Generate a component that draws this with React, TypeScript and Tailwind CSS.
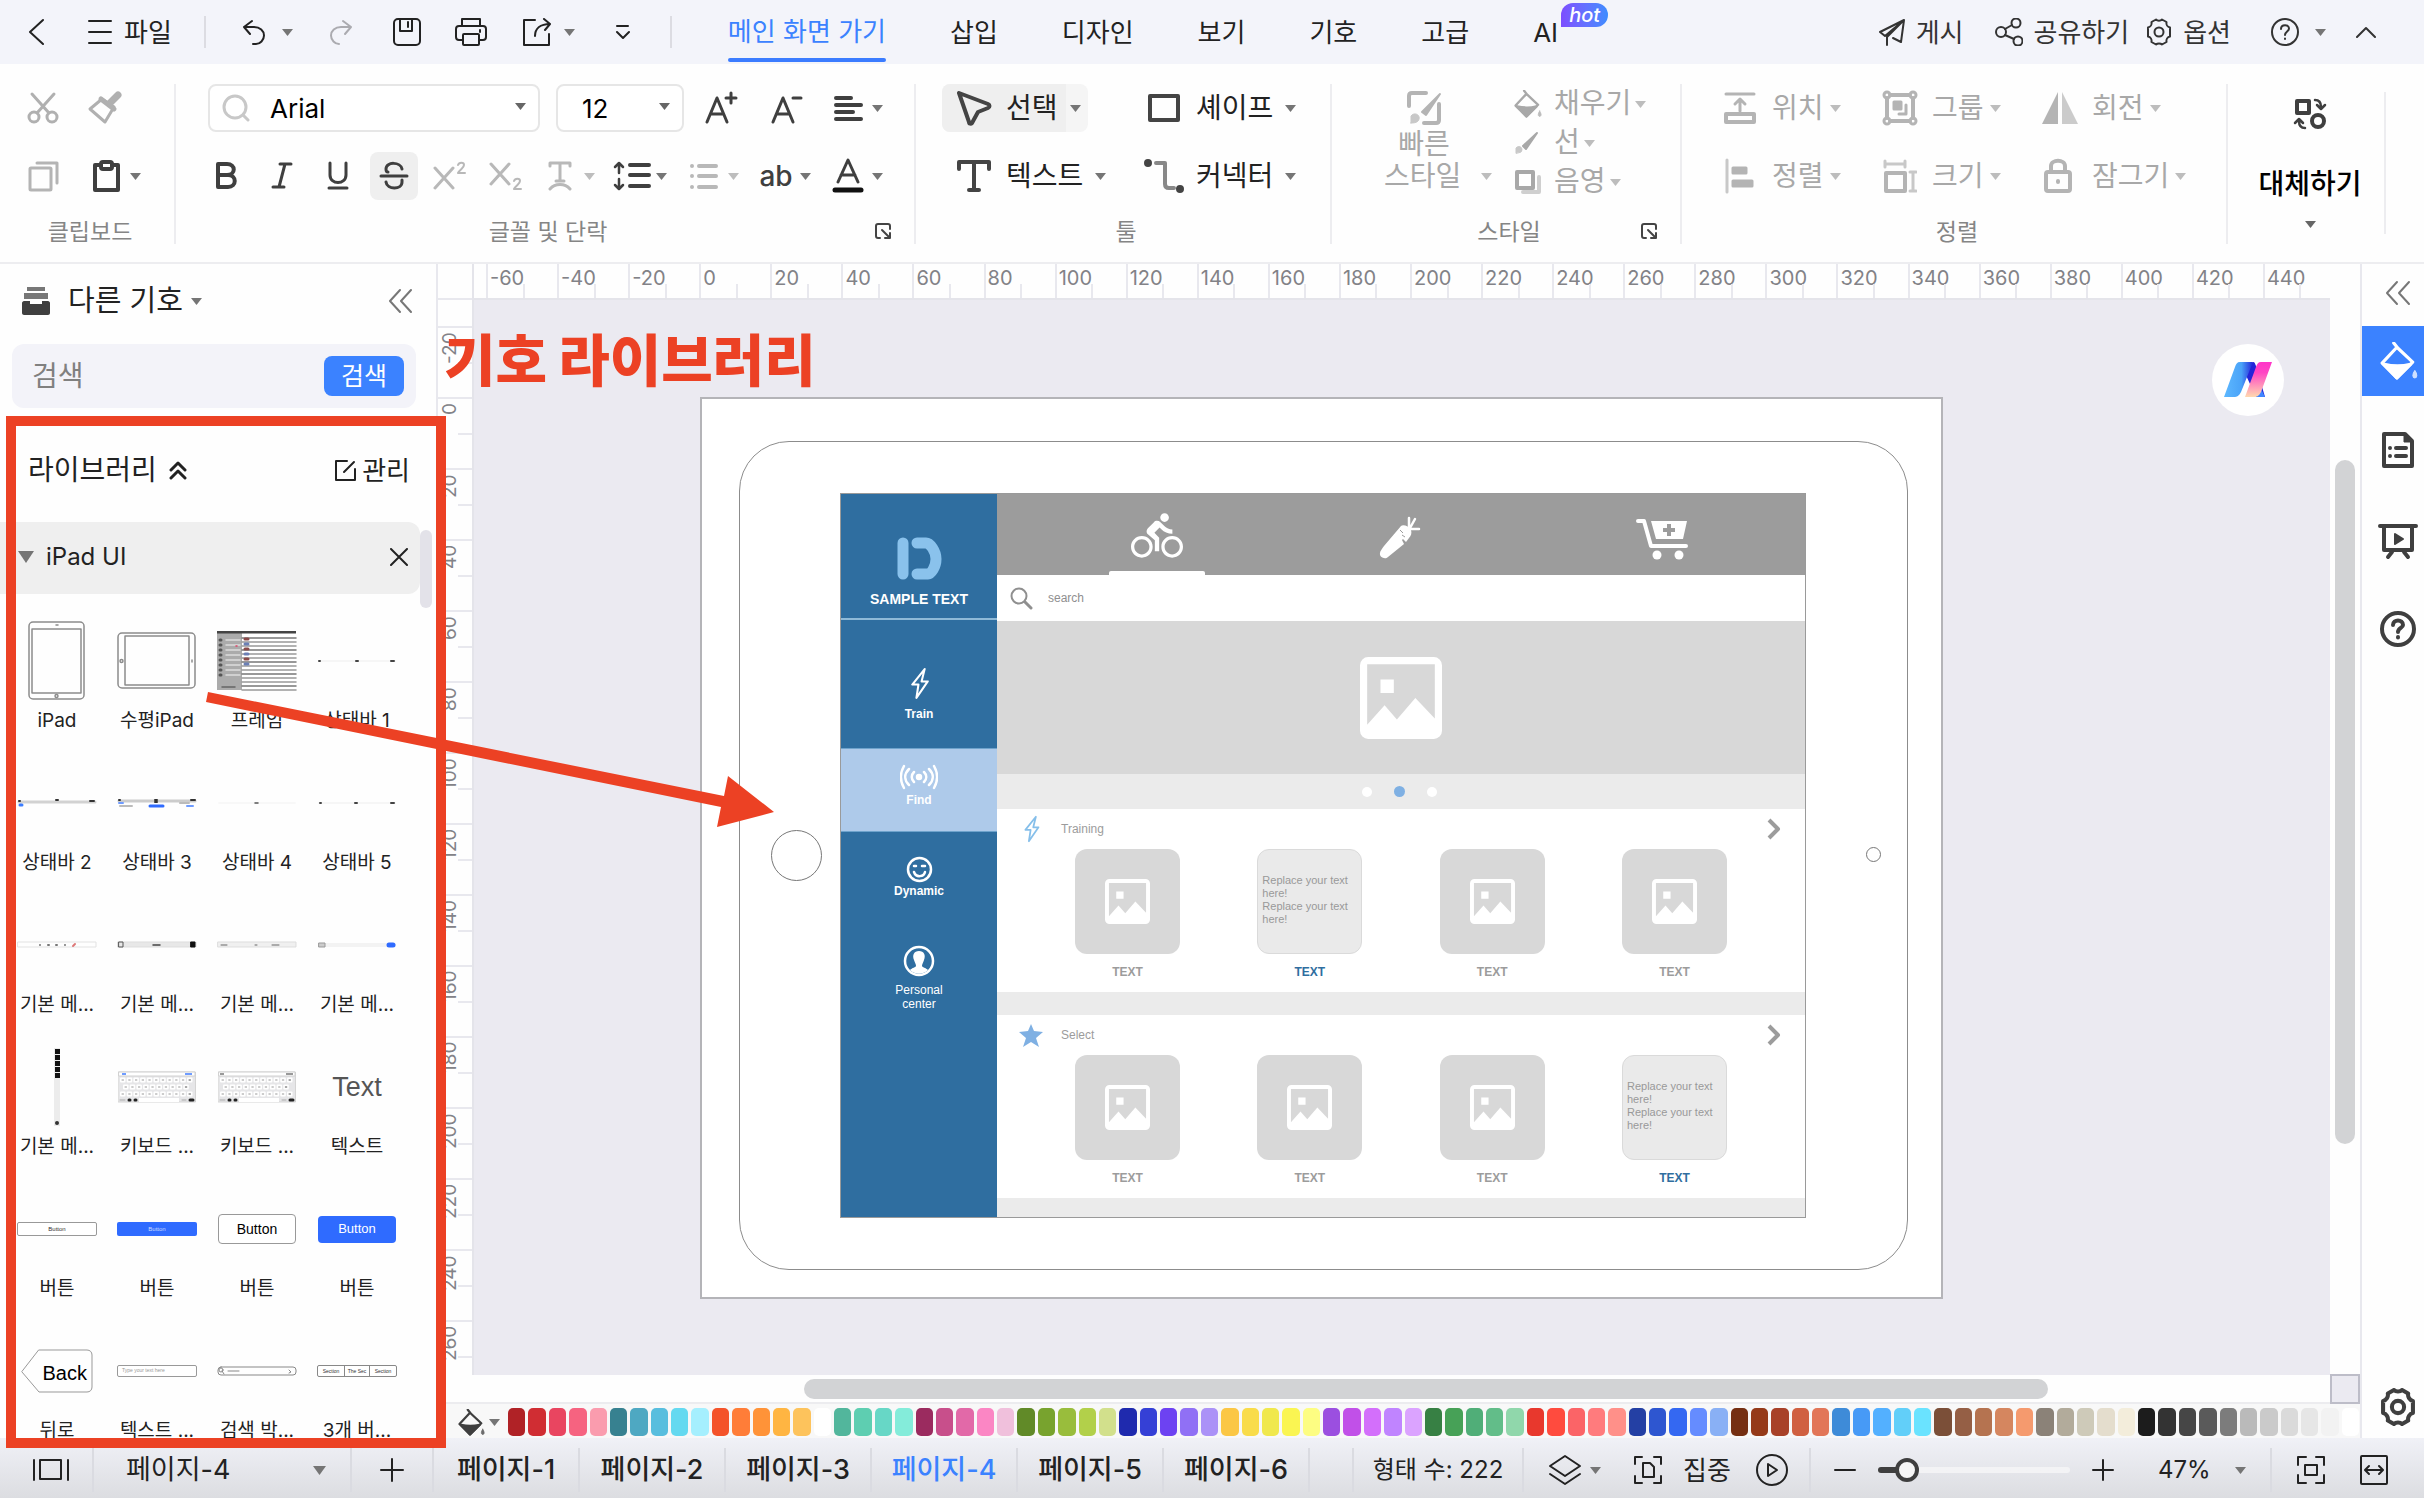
import React from "react";
import { MdDirectionsBike } from "react-icons/md";

type Kids = { children?: React.ReactNode };

function Ic({ w, h, sw = 2, c = "", children }: Kids & { w: number; h: number; sw?: number; c?: string }) {
  return (
    <svg width={w} height={h} viewBox={`0 0 ${w} ${h}`} fill="none" stroke="currentColor" strokeWidth={sw} strokeLinecap="round" strokeLinejoin="round" className={`shrink-0 ${c}`} aria-hidden="true">
      {children}
    </svg>
  );
}

function Caret({ c = "" }: { c?: string }) {
  return (
    <svg width="11" height="8" viewBox="0 0 11 8" fill="currentColor" className={`shrink-0 ${c}`} aria-hidden="true">
      <path d="M0 1h11L5.500 8z" />
    </svg>
  );
}

const CARET = "text-[#757575]";

/* ---------- Top bar ---------- */

const menuTabs = ["삽입", "디자인", "보기", "기호", "고급"];

function TopBar() {
  return (
    <header className="flex h-16 shrink-0 items-center bg-[#f3f4fa] pr-12 pl-7 text-[26px] text-[#222]">
      <button aria-label="뒤로 가기">
        <Ic w={16} h={28} sw={2}><path d="M15 2 2 14l13 12" /></Ic>
      </button>
      <button className="ml-11 flex items-center gap-3">
        <Ic w={24} h={26}><path d="M1 2h22M1 13h22M1 24h22" /></Ic>
        파일
      </button>
      <span className="ml-8 h-8 w-0.5 bg-[#dcdce2]" />
      <button aria-label="실행 취소" className="ml-9 flex items-center gap-4">
        <Ic w={24} h={26}><path d="M10 2 2 8l6 7M2 8h10c6 0 10 4 10 8.500s-4 8.500-8 8.500h-3" /></Ic>
        <Caret c={CARET} />
      </button>
      <button aria-label="다시 실행" className="ml-9 text-[#ababb0]">
        <Ic w={24} h={26}><path d="m14 2 8 6-6 7M22 8H12C6 8 2 12 2 16.500S6 25 10 25" /></Ic>
      </button>
      <button aria-label="저장" className="ml-10">
        <Ic w={28} h={28}><rect x="1" y="1" width="26" height="26" rx="4" /><path d="M7 1v12h12V1M15 4v5" /></Ic>
      </button>
      <button aria-label="인쇄" className="ml-[34px]">
        <Ic w={32} h={28}><path d="M7 8V1h18v7M7 22H4a3 3 0 0 1-3-3v-8a3 3 0 0 1 3-3h24a3 3 0 0 1 3 3v8a3 3 0 0 1-3 3h-3" /><rect x="8" y="16" width="16" height="11" rx="1" /><path d="M25 12v2" /></Ic>
      </button>
      <button aria-label="내보내기" className="ml-9 flex items-center gap-3">
        <Ic w={29} h={28}><path d="M12 2H1v25h25V16M12 18c0-7 5-12 15-12M21 1l6 5-5 6" /></Ic>
        <Caret c={CARET} />
      </button>
      <button aria-label="사용자 지정" className="ml-10">
        <Ic w={15} h={16}><path d="M2 2h11M2 8l6 6 6-6" /></Ic>
      </button>
      <span className="ml-10 h-8 w-0.5 bg-[#dcdce2]" />
      <nav className="ml-14 flex h-full items-center gap-16">
        <button className="flex h-full flex-col text-[#3b82ff]">
          <span className="flex grow items-center pt-1">메인 화면 가기</span>
          <span className="mb-0.5 h-1 w-full rounded-sm bg-[#3b7cff]" />
        </button>
        {menuTabs.map((t) => (
          <button key={t}>{t}</button>
        ))}
        <button className="relative">
          AI
          <span className="absolute -top-2.5 left-7 rounded-t-xl rounded-br-xl bg-linear-to-r from-[#7c4dff] to-[#3b8cff] px-2 text-[20px] leading-6 font-medium text-white italic">hot</span>
        </button>
      </nav>
      <div className="ml-auto flex items-center text-[26px] text-[#333]">
        <button className="flex items-center gap-2.5">
          <Ic w={28} h={28}><path d="M26 2 2 14l5 4L26 2l-3 22-8-4M9 27v-8L26 2" /></Ic>
          게시
        </button>
        <button className="ml-8 flex items-center gap-2.5">
          <Ic w={28} h={28}><circle cx="6" cy="14" r="5" /><circle cx="21" cy="5" r="4.500" /><circle cx="23" cy="23" r="4.500" /><path d="m10 11 7-4M10 17l9 4" /></Ic>
          공유하기
        </button>
        <button className="ml-4 flex items-center gap-2.5">
          <Gear size={28} sw={2} />
          옵션
        </button>
        <button aria-label="도움말" className="ml-10 flex items-center gap-4">
          <Ic w={28} h={28}><circle cx="14" cy="14" r="13" /><path d="M10 11c0-5 8-5 8-.5 0 3-4 3-4 6.500M14 20.500v.5" /></Ic>
          <Caret c={CARET} />
        </button>
        <button aria-label="리본 접기" className="ml-[30px]">
          <Ic w={20} h={12}><path d="m1 11 9-9 9 9" /></Ic>
        </button>
      </div>
    </header>
  );
}

function Gear({ size, sw }: { size: number; sw: number }) {
  return (
    <svg width={size} height={size} viewBox="0 0 28 28" fill="none" stroke="currentColor" strokeWidth={sw} strokeLinejoin="round" aria-hidden="true">
      <path d="M11 1.500c1.500 1.500 4.500 1.500 6 0l4.500 2.500c-.5 2.500 1 5 3.500 5.500v9c-2.500.5-4 3-3.500 5.500L17 26.500c-1.500-1.500-4.500-1.500-6 0L6.500 24c.5-2.500-1-5-3.500-5.500v-9c2.500-.5 4-3 3.500-5.500z" />
      <circle cx="14" cy="14" r="4.500" />
    </svg>
  );
}

/* ---------- Ribbon ---------- */

function Group({ width, label, launcher, children }: Kids & { width: string; label: string; launcher?: boolean }) {
  return (
    <section className={`relative flex shrink-0 flex-col pt-5 ${width}`}>
      <div className="h-[116px]">{children}</div>
      <div className="relative mt-4 pl-1 text-center text-[23px] leading-8 text-[#858585]">
        {label}
        {launcher && (
          <button aria-label={`${label} 설정`} className="absolute top-1.5 right-6 text-[#444]">
            <Ic w={18} h={18}><path d="M6 16H4a2 2 0 0 1-2-2V4a2 2 0 0 1 2-2h10a2 2 0 0 1 2 2v3M8 8l8 8M16 11v5h-5" /></Ic>
          </button>
        )}
      </div>
      <span className="absolute top-5 right-0 h-40 w-0.5 bg-[#ededf0]" />
    </section>
  );
}

function FontButton({ label, on, off, children }: Kids & { label: string; on?: boolean; off?: boolean }) {
  return (
    <button aria-label={label} className={`flex size-12 items-center justify-center rounded-lg ${on ? "bg-[#efefef]" : ""} ${off ? "text-[#b8b8b8]" : "text-[#3f3f3f]"}`}>
      {children}
    </button>
  );
}

function DropButton({ label, off, children }: Kids & { label: string; off?: boolean }) {
  return (
    <button aria-label={label} className={`flex h-12 w-[72px] shrink-0 items-center ${off ? "text-[#b8b8b8]" : "text-[#3f3f3f]"}`}>
      <span className="flex w-10 justify-center">{children}</span>
      <Caret c={off ? "ml-1 text-[#bdbdbd]" : "ml-1 text-[#757575]"} />
    </button>
  );
}

function TextTool({ icon, text, c = "" }: { icon: React.ReactNode; text: string; c?: string }) {
  return (
    <button className={`flex h-12 items-center ${c}`}>
      <span className="flex w-10 justify-center text-[#444]">{icon}</span>
      <span className="ml-3">{text}</span>
      <Caret c="ml-3 text-[#757575]" />
    </button>
  );
}

function OffTool({ icon, text }: { icon: React.ReactNode; text: string }) {
  return (
    <button className="flex h-12 items-center text-[#a8a8a8]">
      <span className="flex w-9 justify-center text-[#b4b4b4]">{icon}</span>
      <span className="ml-3.5">{text}</span>
      <Caret c="ml-1.5 text-[#bdbdbd]" />
    </button>
  );
}

function Ribbon() {
  return (
    <div className="flex h-[200px] shrink-0 border-b-2 border-[#ededf0] bg-[#fefefe] text-[28px] text-[#222]">
      <Group width="w-[176px]" label="클립보드">
        <div className="flex flex-col gap-5 pl-6">
          <div className="flex h-12 items-center gap-6 text-[#b0b0b0]">
            <button aria-label="잘라내기">
              <Ic w={38} h={34} sw={3}><circle cx="10" cy="26" r="5" /><circle cx="28" cy="26" r="5" /><path d="M8 3l17 19M30 3 13 22" /></Ic>
            </button>
            <button aria-label="서식 복사">
              <Ic w={38} h={34} sw={3}><path d="M16 8 4 18l15 13 9-15z" /><path d="m15 8 13 10" strokeWidth="5" /><path d="m24 12 8-8" strokeWidth="7" /></Ic>
            </button>
          </div>
          <div className="flex h-12 items-center text-[#b4b4b4]">
            <button aria-label="복사" className="ml-1">
              <Ic w={32} h={32} sw={3}><rect x="2" y="8" width="21" height="22" rx="1" /><path d="M9 3h20v20" /></Ic>
            </button>
            <button aria-label="붙여넣기" className="ml-8 flex items-center gap-2 text-[#3f3f3f]">
              <Ic w={30} h={32} sw={4}><path d="M8 5H3v25h23V5h-5" /><rect x="9" y="2" width="11" height="7" rx="2" /></Ic>
              <Caret c={CARET} />
            </button>
          </div>
        </div>
      </Group>

      <Group width="w-[740px]" label="글꼴 및 단락" launcher>
        <div className="flex h-12 items-center pl-8">
          <label className="flex h-12 w-[332px] items-center rounded-lg border-2 border-[#e6e6e6] bg-white px-3 text-[26px]">
            <Ic w={28} h={28} sw={3} c="text-[#c8c8c8]"><circle cx="13" cy="13" r="11" /><path d="m21 21 5 5" /></Ic>
            <select aria-label="글꼴" className="ml-5 min-w-0 grow appearance-none text-black"><option>Arial</option></select>
            <Caret c="-mt-1 text-[#666]" />
          </label>
          <label className="ml-4 flex h-12 w-[128px] items-center rounded-lg border-2 border-[#e6e6e6] bg-white pr-3 pl-6 text-[26px]">
            <select aria-label="글꼴 크기" className="min-w-0 grow appearance-none text-black"><option>12</option></select>
            <Caret c="-mt-1 text-[#666]" />
          </label>
          <button aria-label="글꼴 크게" className="ml-5 text-[#3f3f3f]">
            <Ic w={34} h={34} sw={3}><path d="M3 31 13 7l10 24M7 23h12M27 2v10M22 7h10" /></Ic>
          </button>
          <button aria-label="글꼴 작게" className="ml-8 text-[#3f3f3f]">
            <Ic w={34} h={34} sw={3}><path d="M3 31 13 7l10 24M7 23h12M23 7h8" /></Ic>
          </button>
          <div className="ml-6">
            <DropButton label="맞춤"><Ic w={30} h={26} sw={4}><path d="M3 3h15M3 10h25M3 17h17M3 24h25" /></Ic></DropButton>
          </div>
        </div>
        <div className="mt-5 flex h-12 items-center pl-[26px]">
          <div className="flex gap-2">
            <FontButton label="굵게"><Ic w={24} h={30} sw={4}><path d="M4 3h9c9 0 9 11 0 11H4zM4 14h10c9 0 9 12 0 12H4z" /></Ic></FontButton>
            <FontButton label="기울임꼴"><Ic w={24} h={30} sw={3}><path d="M10 3h11M3 26h11M15 3 9 26" /></Ic></FontButton>
            <FontButton label="밑줄"><Ic w={24} h={30} sw={3}><path d="M4 2v12c0 10 16 10 16 0V2M3 27h18" /></Ic></FontButton>
            <FontButton label="취소선" on><Ic w={30} h={30} sw={3}><path d="M23 8c-1-7-16-8-16 0 0 2 1 3 2 3M2 15h26M7 21c1 8 16 8 16 0v-2" /></Ic></FontButton>
            <FontButton label="위 첨자" off><Ic w={34} h={30} sw={3}><path d="m2 7 18 20M20 7 2 27" /><path d="M25 4c1-3 6-3 6 0 0 3-4 4-6 8h7" strokeWidth="2" /></Ic></FontButton>
            <FontButton label="아래 첨자" off><Ic w={34} h={30} sw={3}><path d="M2 3l18 20M20 3 2 23" /><path d="M25 20c1-3 6-3 6 0 0 3-4 4-6 8h7" strokeWidth="2" /></Ic></FontButton>
          </div>
          <div className="ml-2.5 flex">
            <DropButton label="텍스트 효과" off><Ic w={24} h={30} sw={3}><path d="M2 5V2h20v3M12 2v18M8 20h8M2 28c5-6 15-6 20 0" /></Ic></DropButton>
            <DropButton label="줄 간격"><Ic w={38} h={30} sw={4}><path d="M17 4h19M17 14h19M17 25h19" /><path d="M6 3v9M2 6l4-4 4 4M6 18v9M2 24l4 4 4-4" strokeWidth="2.500" /></Ic></DropButton>
            <DropButton label="목록" off><Ic w={30} h={28} sw={4}><path d="M10 4h17M10 14h17M10 25h17" /><path d="M3 4h0M3 14h0M3 25h0" /></Ic></DropButton>
            <DropButton label="대소문자"><span className="text-[28px] leading-8 font-medium">ab</span></DropButton>
            <DropButton label="글꼴 색"><Ic w={34} h={36} sw={3}><path d="M7 24 17 2l10 22M10 17h14" /><path d="M4 32h26" strokeWidth="5" className="text-[#111]" /></Ic></DropButton>
          </div>
        </div>
      </Group>

      <Group width="w-[416px]" label="툴">
        <div className="grid grid-cols-[196px_1fr] gap-y-5 pl-[26px]">
          <button className="flex h-12 w-[146px] items-center rounded-lg bg-[#f5f5f5]">
            <span className="flex h-12 items-center rounded-l-lg bg-[#efefef] pl-3">
              <span className="flex w-10 justify-center text-[#444]">
                <Ic w={36} h={36} sw={4}><path d="M3 3l29 11c2 1 2 3 0 4l-10 4-6 11c-1 1-3 1-3-1z" /></Ic>
              </span>
              <span className="mr-2 ml-3">선택</span>
            </span>
            <Caret c="ml-1 text-[#757575]" />
          </button>
          <TextTool text="셰이프" icon={<Ic w={34} h={30} sw={4}><rect x="3" y="3" width="28" height="24" /></Ic>} c="pl-1.5" />
          <TextTool text="텍스트" icon={<Ic w={34} h={34} sw={4}><path d="M2 10V3h30v7M17 3v28M12 31h10" /></Ic>} c="pl-3" />
          <TextTool text="커넥터" icon={<Ic w={40} h={36} sw={4}><path d="M12 5h9v21c0 2 1 4 4 4h5" className="text-[#888]" /><path d="M4 5h0M36 31h0" strokeWidth="8" /></Ic>} c="pl-1.5" />
        </div>
      </Group>

      <Group width="w-[350px]" label="스타일" launcher>
        <div className="flex h-full pl-[52px] text-[#a8a8a8]">
          <button className="flex w-[116px] flex-col pt-1.5">
            <span className="flex w-[80px] justify-center text-[#b4b4b4]">
              <Ic w={36} h={36} sw={4}><path d="M3 16V6c0-2 1-3 3-3h14M33 14v16c0 2-1 3-3 3H18" /><path d="M34 4 16 22l4 3z" fill="currentColor" strokeWidth="2" /><path d="M5 33V26c4-5 11 0 7 5-2 2-5 2-7 2z" fill="currentColor" strokeWidth="1" className="text-[#c8c8c8]" /></Ic>
            </span>
            <span className="mt-0.5 w-[80px] text-center leading-8">빠른</span>
            <span className="flex items-center leading-8">스타일 <Caret c="ml-5 text-[#bdbdbd]" /></span>
          </button>
          <div className="ml-3.5 flex flex-col leading-[39px]">
            <button className="flex items-center">
              <span className="w-10"><BucketIcon size={28} /></span>채우기<Caret c="ml-1 text-[#bdbdbd]" />
            </button>
            <button className="flex items-center">
              <span className="w-10"><Ic w={26} h={24} sw={2}><path d="M23 2 9 15l3 3z" fill="currentColor" /><path d="M2 22v-5c4-4 8 1 5 4z" fill="currentColor" strokeWidth="1" className="text-[#c8c8c8]" /></Ic></span>선<Caret c="ml-1 text-[#bdbdbd]" />
            </button>
            <button className="flex items-center">
              <span className="w-10"><Ic w={28} h={26} sw={4}><path d="M9 23h16V8" className="text-[#cfcfcf]" /><rect x="3" y="3" width="16" height="16" fill="white" /></Ic></span>음영<Caret c="ml-1 text-[#bdbdbd]" />
            </button>
          </div>
        </div>
      </Group>

      <Group width="w-[546px]" label="정렬">
        <div className="grid grid-cols-[160px_160px_1fr] gap-y-5 pl-10">
          <OffTool text="위치" icon={<Ic w={34} h={34} sw={3}><path d="M3 3h28M17 20V9M12 13l5-5 5 5" /><rect x="3" y="23" width="28" height="8" strokeWidth="4" /></Ic>} />
          <OffTool text="그룹" icon={<Ic w={36} h={36} sw={3}><path d="M8 5h20M8 31h20M5 8v20M31 8v20" strokeWidth="4" /><circle cx="5" cy="5" r="3" /><circle cx="31" cy="5" r="3" /><circle cx="5" cy="31" r="3" /><circle cx="31" cy="31" r="3" /><path d="M12 12h7v7h-7z" fill="currentColor" /><path d="M24 15v9h-7" /></Ic>} />
          <OffTool text="회전" icon={<Ic w={36} h={34} sw={0}><path d="M16 1v32H0z" fill="currentColor" /><path d="M20 1v32h16z" fill="#cbcbcb" /></Ic>} />
          <OffTool text="정렬" icon={<Ic w={34} h={36} sw={3}><path d="M4 2v32" className="text-[#c8c8c8]" /><path d="M10 10h13v5H10zM10 23h19v5H10z" fill="currentColor" /></Ic>} />
          <OffTool text="크기" icon={<Ic w={34} h={34} sw={3}><rect x="3" y="14" width="19" height="18" strokeWidth="4" /><path d="M2 5h20M2 2v6M22 2v6M30 13v19M27 13h6M27 32h6" className="text-[#c8c8c8]" /></Ic>} />
          <OffTool text="잠그기" icon={<Ic w={34} h={36} sw={4}><rect x="3" y="14" width="24" height="19" rx="2" /><path d="M8 14V8c0-7 14-7 14 0v6M15 23v1" /></Ic>} />
        </div>
      </Group>

      <div className="relative w-[158px] shrink-0">
        <button className="flex w-full flex-col items-center pt-[34px] pl-1.5 font-medium text-black">
          <Ic w={34} h={32} sw={4} c="text-[#3f3f3f]"><rect x="4" y="3" width="12" height="12" /><circle cx="25" cy="23" r="6" /><path d="M22 2c4 0 6 3 6 7M24 7l4 4 4-4M12 30c-4 0-6-3-6-7M2 25l4-4 4 4" strokeWidth="2.500" /></Ic>
          <span className="mt-[34px] leading-10">대체하기</span>
          <Caret c="mt-4 text-[#666]" />
        </button>
        <span className="absolute top-7 right-0 h-[142px] w-0.5 bg-[#ededf0]" />
      </div>
    </div>
  );
}

function BucketIcon({ size }: { size: number }) {
  return (
    <svg width={size} height={size} viewBox="0 0 36 36" fill="none" stroke="currentColor" strokeWidth="3" strokeLinejoin="round" strokeLinecap="round" aria-hidden="true">
      <path d="M13 1l4 5M16 5 2 20l14 14 15-15z" />
      <path d="M4 21c8 2 17 2 25 0L16 34z" fill="currentColor" />
      <path d="M33 27c3 4 2 7 0 7s-3-3 0-7z" fill="currentColor" strokeWidth="1" opacity=".75" />
    </svg>
  );
}

/* ---------- Left library panel ---------- */

type Kind = "ipad" | "ipadH" | "frame" | "s1" | "s2" | "s3" | "s4" | "s5" | "m1" | "m2" | "m3" | "m4" | "m5" | "kb" | "kb2" | "text" | "b1" | "b2" | "b3" | "b4" | "back" | "field" | "search" | "seg";

const items: [Kind, string][] = [
  ["ipad", "iPad"], ["ipadH", "수평iPad"], ["frame", "프레임"], ["s1", "상태바 1"],
  ["s2", "상태바 2"], ["s3", "상태바 3"], ["s4", "상태바 4"], ["s5", "상태바 5"],
  ["m1", "기본 메..."], ["m2", "기본 메..."], ["m3", "기본 메..."], ["m4", "기본 메..."],
  ["m5", "기본 메..."], ["kb", "키보드 ..."], ["kb2", "키보드 ..."], ["text", "텍스트"],
  ["b1", "버튼"], ["b2", "버튼"], ["b3", "버튼"], ["b4", "버튼"],
  ["back", "뒤로"], ["field", "텍스트 ..."], ["search", "검색 박..."], ["seg", "3개 버..."],
];

function Keyboard({ blue }: { blue: boolean }) {
  const rows = [11, 10, 11];
  return (
    <Ic w={78} h={32} sw={1}>
      <rect x="0.500" y="1" width="77" height="30" fill="#e6e6e8" stroke="#d4d4d4" />
      <rect x="1" y="1" width="76" height="4" fill="#fff" stroke="#d0d0d0" />
      <path d={blue ? "M4 3h4M67 3h7" : "M2 3h4M68 3h7"} stroke={blue ? "#6f9cff" : "#999"} strokeWidth="2" strokeLinecap="butt" />
      {rows.map((n, r) =>
        Array.from({ length: n }, (_, i) => (
          <g key={`${r}-${i}`}>
            <rect x={2 + (r === 1 ? 3 : 0) + i * 6.7} y={6.500 + r * 7} width="5.500" height="5" rx="1" fill="#fff" stroke="none" />
            <path d={`M${4 + (r === 1 ? 3 : 0) + i * 6.7} ${9 + r * 7}h1.500`} stroke={i === n - 1 ? "#555" : "#999"} />
          </g>
        ))
      )}
      <rect x="21" y="27" width="40" height="4" fill="#fff" stroke="none" />
      <path d="M11 29h1M17 29h1M72 29h3" stroke="#222" strokeWidth="3" />
      <path d="M2 29h5M64 29h4" stroke="#aaa" />
    </Ic>
  );
}

function Thumb({ kind }: { kind: Kind }) {
  switch (kind) {
    case "ipad":
      return <Ic w={58} h={80} sw={1.5} c="text-[#8c8c8c]"><rect x="1" y="1" width="55" height="77" rx="4" /><rect x="4" y="8" width="49" height="64" /><circle cx="28.500" cy="75" r="1.500" /><path d="M28 4h2" /></Ic>;
    case "ipadH":
      return <Ic w={80} h={58} sw={1.5} c="text-[#8c8c8c]"><rect x="1" y="1" width="77" height="55" rx="4" /><rect x="8" y="4" width="64" height="49" /><circle cx="4.500" cy="29" r="1.500" /><path d="M75 28v2" /></Ic>;
    case "frame":
      return (
        <Ic w={80} h={60} sw={1.5}>
          <rect width="25" height="59" fill="#ababab" stroke="none" />
          <rect x="25" width="54" height="59" fill="#fff" stroke="none" />
          <path d="M0 1h79" stroke="#444" strokeWidth="3" strokeLinecap="butt" />
          {Array.from({ length: 14 }, (_, i) => <path key={i} d={`M25 ${7 + i * 4}h54`} stroke={i % 3 ? "#999" : "#777"} />)}
          {Array.from({ length: 8 }, (_, i) => <path key={i} d={`M9 ${9 + i * 5}h14`} stroke="#ddd" />)}
          {Array.from({ length: 8 }, (_, i) => <path key={i} d={`M3 ${9 + i * 5}h1`} stroke="#555" strokeWidth="3" />)}
          {Array.from({ length: 6 }, (_, i) => <path key={i} d={`M28 ${8 + i * 5}h3`} stroke={i % 2 ? "#6b7fb5" : "#8a4a4a"} strokeWidth="3" />)}
          <path d="M19 15h1" stroke="#e0446a" /><path d="M5 56h13" stroke="#666" />
        </Ic>
      );
    case "s1":
      return <Ic w={80} h={6} sw={2}><path d="M2 3h76" stroke="#f6f6f6" /><path d="M2 3h1M39 3h2M74 3h3" stroke="#444" /></Ic>;
    case "s2":
      return <Ic w={80} h={10} sw={2}><path d="M2 4h76" stroke="#d2d2d2" strokeWidth="3" /><path d="M2 3h1M39 2h2M73 3h4" stroke="#333" /><path d="M3 7h2" stroke="#3b7cff" strokeWidth="3" /></Ic>;
    case "s3":
      return <Ic w={80} h={12} sw={2}><path d="M2 4h76" stroke="#ccc" strokeWidth="3" /><path d="M2 3h1M38 3h2M74 3h4M38 5h2" stroke="#333" /><path d="M3 9h12M63 6h9" stroke="#bbb" /><path d="M33 9h13" stroke="#2f6bff" strokeWidth="3" /><path d="M2 6h4M70 9h6" stroke="#6f9cff" /></Ic>;
    case "s4":
      return <Ic w={80} h={6} sw={2}><path d="M2 3h76" stroke="#f8f8f8" /><path d="M38 3h3" stroke="#555" strokeWidth="1.500" /></Ic>;
    case "s5":
      return <Ic w={80} h={6} sw={2}><path d="M2 3h76" stroke="#f6f6f6" /><path d="M3 3h1M38 3h2M74 3h3" stroke="#444" /></Ic>;
    case "m1":
      return <Ic w={80} h={8} sw={1}><rect x="1" y="1" width="78" height="5" stroke="#e2e2e2" /><path d="M23 4h0M31 4h1M39 4h1M48 4h0" stroke="#777" strokeWidth="2" /><path d="m56 5 2-2" stroke="#d77" strokeWidth="2" /></Ic>;
    case "m2":
      return <Ic w={80} h={8} sw={1}><rect x="1" y="1" width="78" height="5" fill="#e8e8e8" stroke="#ddd" /><path d="M36 4h7" stroke="#444" strokeWidth="1.500" /><rect x="2" y="1" width="4" height="5" stroke="#555" /><rect x="74" y="1" width="4" height="5" fill="#111" stroke="#111" /></Ic>;
    case "m3":
      return <Ic w={80} h={8} sw={1}><rect x="1" y="1" width="78" height="5" stroke="#ddd" fill="#f0f0f0" /><path d="M4 4h6M38 4h2M55 4h7" stroke="#666" strokeWidth="1" /></Ic>;
    case "m4":
      return <Ic w={80} h={8} sw={1}><path d="M3 4h74" stroke="#f3f3f3" strokeWidth="4" /><rect x="2" y="2" width="6" height="4" stroke="#999" fill="#ccc" /><path d="M72 4h4" stroke="#2f6bff" strokeWidth="5" /></Ic>;
    case "m5":
      return <Ic w={8} h={78} sw={0}><rect x="1" width="6" height="78" fill="#ececec" />{[0, 6, 12, 18, 24].map((y) => <rect key={y} x="2" y={y + 1} width="5" height="5" fill="#111" />)}<circle cx="4" cy="75" r="2" fill="#333" /></Ic>;
    case "kb":
      return <Keyboard blue />;
    case "kb2":
      return <Keyboard blue={false} />;
    case "text":
      return <span className="text-[27px] text-[#555]">Text</span>;
    case "b1":
      return <span className="flex h-3.5 w-20 items-center justify-center rounded-xs border border-[#999] bg-white text-[6px] text-[#333]">Button</span>;
    case "b2":
      return <span className="flex h-3.5 w-20 items-center justify-center rounded-xs bg-[#2f6bff] text-[6px] text-[#c9d9ff]">Button</span>;
    case "b3":
      return <span className="flex h-[30px] w-[78px] items-center justify-center rounded-sm border border-[#999] bg-white text-[14px] text-black">Button</span>;
    case "b4":
      return <span className="flex h-[27px] w-[78px] items-center justify-center rounded-sm bg-[#2f6bff] text-[13px] text-white">Button</span>;
    case "back":
      return (
        <span className="relative flex h-11 w-[72px] items-center justify-end pt-1 pr-1.5 text-[20px] text-black">
          <Ic w={72} h={44} sw={1} c="absolute inset-0 text-[#999]"><path d="M18 1h48c3 0 5 2 5 5v32c0 3-2 5-5 5H18L1 23z" /></Ic>
          Back
        </span>
      );
    case "field":
      return <span className="flex h-3 w-20 items-center rounded-xs border border-[#999] bg-white pl-1 text-[5px] text-[#999]">Type your text here</span>;
    case "search":
      return <Ic w={80} h={12} sw={1} c="text-[#888]"><rect x="1" y="2" width="78" height="8" rx="3" /><circle cx="4" cy="5" r="2" /><path d="m5 6 2 3M11 6h11M72 5l2 2-2 1" /></Ic>;
    case "seg":
      return (
        <span className="grid h-3 w-20 grid-cols-3 rounded-xs border border-[#888] bg-white text-center text-[5px] leading-[10px] text-[#333]">
          <span>Section</span><span className="border-x border-[#888]">The Sec</span><span>Section</span>
        </span>
      );
  }
}

function LibraryPanel() {
  return (
    <aside className="flex w-[438px] shrink-0 flex-col border-r-2 border-[#e8e8ee] bg-[#fefefe] text-[#222]">
      <div className="flex h-20 shrink-0 items-center pr-6 pb-1.5 pl-[22px]">
        <Ic w={28} h={28} sw={0}>
          <path d="M5 0h18v4H5zM2 6h24v6H2z" fill="#777" />
          <path d="M2 14h6v3h12v-3h6c1 0 2 1 2 2v10c0 1-1 2-2 2H2c-1 0-2-1-2-2V16c0-1 1-2 2-2z" fill="#3f3f3f" />
        </Ic>
        <button className="ml-[18px] flex items-center gap-2 text-[29px]">다른 기호 <Caret c={CARET} /></button>
        <button aria-label="패널 접기" className="ml-auto text-[#777]">
          <Ic w={24} h={26}><path d="M12 2 2 13l10 11M23 2 13 13l10 11" /></Ic>
        </button>
      </div>
      <form className="ml-3 flex h-16 w-[404px] shrink-0 items-center rounded-xl bg-[#f3f3f9] pr-3 pl-5" onSubmit={(e) => e.preventDefault()}>
        <input aria-label="기호 검색" placeholder="검색" className="min-w-0 grow text-[28px] placeholder:text-[#808080]" />
        <button className="h-10 w-20 shrink-0 rounded-lg bg-[#3b82ff] text-[25px] leading-10 text-white">검색</button>
      </form>
      <div className="flex h-[114px] shrink-0 items-center pt-2.5 pr-[26px] pl-7">
        <button className="flex items-center gap-3 text-[28px]">
          라이브러리
          <Ic w={18} h={20} sw={3}><path d="m2 10 7-7 7 7M2 18l7-7 7 7" /></Ic>
        </button>
        <button className="ml-auto flex items-center gap-1.5 text-[26px]">
          <Ic w={21} h={21}><path d="M12 1H1v19h19V9M9 12 19 2" /></Ic>
          관리
        </button>
      </div>
      <div className="flex min-h-0 grow">
        <div className="w-[420px] shrink-0">
          <div className="flex h-[72px] items-center rounded-r-xl bg-[#efefef] pr-3 pb-0.5 pl-[18px]">
            <button className="flex items-center gap-3 text-[24px]">
              <svg width="16" height="12" viewBox="0 0 16 12" fill="#757575" aria-hidden="true"><path d="M0 0h16L8 12z" /></svg>
              iPad UI
            </button>
            <button aria-label="닫기" className="ml-auto"><Ic w={18} h={18}><path d="m1 1 16 16M17 1 1 17" /></Ic></button>
          </div>
          <ul className="grid grid-cols-[repeat(4,100px)] pt-[27px] pl-[7px]">
            {items.map(([kind, label], i) => (
              <li key={i}>
                <button className="flex h-[142px] w-full flex-col items-center">
                  <span className="flex h-20 items-center font-['Liberation_Sans']"><Thumb kind={kind} /></span>
                  <span className="mt-1 text-[19px] leading-8 whitespace-nowrap">{label}</span>
                </button>
              </li>
            ))}
          </ul>
        </div>
        <div className="mt-2 h-[78px] w-3 rounded-full bg-[#e3e2e9]" />
      </div>
    </aside>
  );
}

/* ---------- Drawing on the canvas ---------- */

function PictureIcon({ w, c = "" }: { w: number; c?: string }) {
  return (
    <svg width={w} height={w} viewBox="0 0 80 80" className={`shrink-0 ${c}`} aria-hidden="true">
      <path fillRule="evenodd" fill="#fff" d="M8 0h64a8 8 0 0 1 8 8v64a8 8 0 0 1-8 8H8a8 8 0 0 1-8-8V8a8 8 0 0 1 8-8zM7 7v59l17-19 12 14 18-21 19 20V7zM20 22h13v13H20z" />
    </svg>
  );
}

function Bolt({ w, h }: { w: number; h: number }) {
  return (
    <svg width={w} height={h} viewBox="0 0 18 32" fill="none" stroke="currentColor" strokeWidth="2" strokeLinejoin="round" aria-hidden="true">
      <path d="M14 2 2 17h6L6 30l11-16h-6z" />
    </svg>
  );
}

type CardData = { note?: boolean };

function Card({ note }: CardData) {
  return (
    <figure className="flex w-[105px] flex-col items-center">
      {note ? (
        <div className="flex h-[105px] w-full items-center rounded-xl border border-[#dadada] bg-[#eaeaea] pb-1 pl-1 text-[11px] leading-[13px] text-[#999]">
          <p>Replace your text here!<br />Replace your text here!</p>
        </div>
      ) : (
        <div className="flex h-[105px] w-full items-center justify-center rounded-xl bg-[#d8d8d8]"><PictureIcon w={45} /></div>
      )}
      <figcaption className={`mt-2.5 text-[12px] leading-4 font-bold ${note ? "text-[#2f6ea0]" : "text-[#9c9c9c]"}`}>TEXT</figcaption>
    </figure>
  );
}

function CardSection({ icon, title, cards }: { icon: React.ReactNode; title: string; cards: CardData[] }) {
  return (
    <section className="h-[183px] bg-white">
      <div className="flex h-10 items-center pr-6 pl-[22px] text-[12px] text-[#9c9c9c]">
        <span className="flex w-6 justify-center text-[#86bfea]">{icon}</span>
        <span className="ml-[18px]">{title}</span>
        <Ic w={14} h={22} sw={4} c="ml-auto"><path d="m2 2 9 9-9 9" strokeLinecap="butt" /></Ic>
      </div>
      <div className="flex justify-between px-[78px]">
        {cards.map((c, i) => <Card key={i} {...c} />)}
      </div>
    </section>
  );
}

function AppMockup() {
  return (
    <div className="flex h-[725px] w-[966px] border border-[#9a9a9a] bg-[#ebebeb] font-['Liberation_Sans',Arial,sans-serif]">
      <div className="flex w-[156px] shrink-0 flex-col bg-[#2f6ea0] text-center text-[12px] leading-4 font-bold text-white">
        <div className="flex h-[126px] flex-col items-center border-b-2 border-[#8fbad8] pt-[42px]">
          <Ic w={46} h={45} sw={11}><g stroke="#8ac2ec"><path d="M7 7v31" /><path d="M21 7h9c4 0 10 8 10 16s-5 15-8 15H21" /></g></Ic>
          <span className="mt-2 text-[14px] leading-5">SAMPLE TEXT</span>
        </div>
        <div className="flex h-[128px] flex-col items-center pt-[47px]"><Bolt w={19} h={33} /><span className="mt-1.5">Train</span></div>
        <div className="flex h-[84px] flex-col items-center border-y border-[#6fa3cc] bg-[#aecaea] pt-[15px]">
          <Ic w={38} h={26} sw={2.5}>
            <circle cx="19" cy="13" r="2" fill="currentColor" />
            <path d="M14 8c-3 3-3 7 0 10M24 8c3 3 3 7 0 10M9 5c-5 5-5 11 0 16M29 5c5 5 5 11 0 16M4 2c-4 7-4 15 0 22M34 2c4 7 4 15 0 22" />
          </Ic>
          <span className="mt-0.5">Find</span>
        </div>
        <div className="flex flex-col items-center pt-6">
          <Ic w={27} h={27} sw={2.5}><circle cx="13.500" cy="13.500" r="11.500" /><path d="M8 10h2M16 10h3M8 16c2 6 10 5 11 0" /></Ic>
          <span>Dynamic</span>
        </div>
        <div className="flex flex-col items-center pt-[46px] font-normal">
          <Ic w={32} h={32} sw={2.5}><circle cx="16" cy="16" r="14" /><path d="M16 6c-5 0-7 4-5 9 1 3 2 4 2 6 0 1-4 2-6 4 5 5 13 5 18 0-2-2-6-3-6-4 0-2 1-3 2-6 2-5 0-9-5-9z" fill="currentColor" strokeWidth="0" /></Ic>
          <span className="mt-1.5 leading-3.5">Personal<br />center</span>
        </div>
      </div>
      <div className="flex min-w-0 grow flex-col">
        <div className="grid h-[81px] shrink-0 grid-cols-[320px_166px_1fr] bg-[#9c9c9c] text-white">
          <div className="flex flex-col items-center">
            <MdDirectionsBike size={52} className="mt-4" />
            <span className="mt-auto h-1 w-24 rounded-t-xs bg-white" />
          </div>
          <div className="flex justify-center pt-[22px]">
            <svg width="42" height="44" viewBox="0 0 42 44" aria-hidden="true">
              <path fill="#fff" d="M22 10c2-2 8 0 10 4 1 3 0 6-2 8l-3 4-3-3-1 1 2 4L9 41c-3 3-9 0-8-4 0-2 2-4 4-7z" />
              <path d="m24 17-3-3M26 21l-3-2" stroke="#9c9c9c" strokeWidth="1" />
              <path d="M30 12V2M31 12l5-9M32 13h8" stroke="#fff" strokeWidth="2.500" strokeLinecap="round" />
            </svg>
          </div>
          <div className="flex justify-center pt-6 pl-9">
            <svg width="52" height="42" viewBox="0 0 52 42" aria-hidden="true">
              <path d="M2 3h6l7 25h35" fill="none" stroke="#fff" strokeWidth="4" strokeLinejoin="round" strokeLinecap="round" />
              <path fillRule="evenodd" d="M15 3h36l-4 18H20zM31 6v4h-4v4h4v4h4v-4h4v-4h-4V6z" fill="#fff" />
              <circle cx="21" cy="37" r="4.500" fill="#fff" /><circle cx="43" cy="37" r="4.500" fill="#fff" />
            </svg>
          </div>
        </div>
        <div className="flex h-[46px] shrink-0 items-center bg-white pl-3 text-[12px] text-[#8f8f8f]">
          <Ic w={24} h={24} sw={2}><circle cx="10" cy="10" r="7.500" /><path d="m16 16 6 6" strokeWidth="3" /></Ic>
          <span className="ml-[15px]">search</span>
        </div>
        <div className="flex h-[153px] shrink-0 items-center justify-center bg-[#d8d8d8]"><PictureIcon w={82} /></div>
        <div className="flex h-[35px] shrink-0 items-center justify-center gap-[22px] pr-1">
          <span className="size-2.5 rounded-full bg-white" />
          <span className="size-[11px] rounded-full bg-[#7fb0e3]" />
          <span className="size-2.5 rounded-full bg-white" />
        </div>
        <CardSection title="Training" icon={<Bolt w={17} h={28} />} cards={[{}, { note: true }, {}, {}]} />
        <div className="h-[23px] shrink-0" />
        <CardSection
          title="Select"
          icon={<svg width="24" height="23" viewBox="0 0 24 23" fill="#7fb0e3" aria-hidden="true"><path d="m12 0 3 7 9 1-7 6 3 9-8-5-8 5 3-9-7-6 9-1z" /></svg>}
          cards={[{}, {}, {}, { note: true }]}
        />
      </div>
    </div>
  );
}

const rulerX = Array.from({ length: 26 }, (_, i) => (i - 3) * 20);
const rulerY = Array.from({ length: 15 }, (_, i) => (i - 1) * 20);

function Workspace() {
  return (
    <div className="flex min-h-0 grow">
      <div className="flex w-9 shrink-0 flex-col overflow-hidden border-r-2 border-[#e4e4ea] bg-[#fefefe]">
        <div className="h-9 shrink-0 border-b-2 border-[#e8e8ee]" />
        <div className="h-[26px] shrink-0" />
        {rulerY.map((n) => (
          <div key={n} className="flex h-[71px] shrink-0 flex-col border-t-2 border-[#e8e8ee] pt-1">
            <span className="h-[30px] text-right leading-6">
              <span className="block w-6 rotate-180 text-left text-[19px] text-[#828287] [writing-mode:vertical-rl]">
                <span className="block h-[60px] text-right">{n}</span>
              </span>
            </span>
            <span className="ml-auto h-0.5 w-3.5 bg-[#e8e8ee]" />
          </div>
        ))}
      </div>
      <div className="flex min-w-0 grow flex-col">
        <div className="flex h-9 shrink-0 overflow-hidden border-b-2 border-[#e4e4ea] bg-[#fefefe] pl-3">
          <div className="-mr-1 flex grow">
            {rulerX.map((n) => (
              <div key={n} className="flex min-w-0 flex-1 border-l-2 border-[#e8e8ee]">
                <span className="w-1/2 pl-0.5 text-[20px] leading-7 whitespace-nowrap text-[#828287]">{n}</span>
                <span className="mt-auto h-3.5 w-0.5 bg-[#e8e8ee]" />
              </div>
            ))}
          </div>
        </div>
        <div className="relative min-h-0 grow overflow-hidden bg-[#ebeaf1]">
          <div className="absolute top-[97px] left-[226px] h-[902px] w-[1243px] border-2 border-[#b4b4b8] bg-white">
            <div className="absolute top-[42px] left-[37px] h-[829px] w-[1169px] rounded-[50px] border border-[#8c8c8c]" />
            <span className="absolute top-[431px] left-[69px] size-[51px] rounded-full border border-[#777]" />
            <span className="absolute top-[448px] left-[1164px] size-[15px] rounded-full border border-[#777]" />
            <div className="absolute top-[94px] left-[138px]"><AppMockup /></div>
          </div>
          <button aria-label="AI 도우미" className="absolute top-11 right-[46px] flex size-[72px] items-center justify-center rounded-full bg-white">
            <svg width="50" height="38" viewBox="0 0 50 38" aria-hidden="true">
              <defs>
                <linearGradient id="blueBar" x1="0" y1="0" x2="1" y2="0"><stop offset="0" stopColor="#5db8ff" /><stop offset=".6" stopColor="#4aa3f8" /><stop offset="1" stopColor="#2424d8" /></linearGradient>
                <linearGradient id="pinkBar" x1="0" y1="0" x2="0" y2="1"><stop offset="0" stopColor="#ff35c8" /><stop offset=".3" stopColor="#ff45c4" /><stop offset="1" stopColor="#ffd9b0" /></linearGradient>
              </defs>
              <path d="M30 1c2 0 2 2 3 4l9 31h-9L21 10z" fill="#2424d8" />
              <path d="m38 28 4 8h-9z" fill="#3f86ff" />
              <path d="M17 1h13L18 31c-2 4-4 5-7 5H1L12 6c1-3 2-5 5-5z" fill="url(#blueBar)" />
              <path d="M38 1h11L38 31c-2 4-4 5-7 5h-9L33 6c1-3 2-5 5-5z" fill="url(#pinkBar)" />
            </svg>
          </button>
        </div>
      </div>
      <div className="flex w-[30px] shrink-0 flex-col items-center bg-[#fefefe] pt-[196px]">
        <div className="h-[684px] w-5 rounded-full bg-[#d2d3d5]" />
      </div>
    </div>
  );
}

const palette = (
  "b02226 d02d33 e94560 f66380 fa9cae 378190 4ea8c2 58bede 64d9f0 a5effe f4532a ff7d38 ff9338 ffb542 fdc35c ffffff 52b69c 5eceb1 67d7c6 84ecda " +
  "9b2b5f c84f8b e269a8 fb86c4 f0c0dc 618a28 78a32e 99bd3c b2d04a d2e08c 1f2aae 3540d6 6d42f2 9070f5 ab92f7 fbc745 f9dc4a f0e84d faf552 fdfd82 " +
  "9b4fe0 c150e8 d36ffb c084ff dba3ff 378044 47a157 50ae78 62bd89 90d7ab e8382d ff4b3e fb6467 ff7b7d ff9089 2440a4 2e56d0 3468f2 658cff 89b0f5 " +
  "752f12 953a19 a84128 d06041 e27658 3e8bd8 479af6 53b0ff 62cff9 6ae3ff 7b4f38 955f45 b57350 d5865f f59a6e 8b8278 b2ab9b cecab9 e4ddcd f3eddb " +
  "1c1c1c 333333 464646 5a5a5a 7c7c7c bababa cacaca dadada e6e6e6 f2f2f2 ffffff"
).split(" ");

function ColorStrip() {
  return (
    <div className="flex h-[34px] shrink-0 items-center bg-[#f8f8f8] pt-0.5">
      <button aria-label="채우기 색" className="ml-5 flex w-[50px] shrink-0 items-center gap-1 text-[#3f3f3f]">
        <BucketIcon size={27} />
        <Caret c={CARET} />
      </button>
      <div className="flex h-7 grow gap-[3px] pr-px">
        {palette.map((hex, i) => (
          <button key={i} aria-label={`색 ${i + 1}`} className="h-7 min-w-0 flex-1 rounded-[5px]" style={{ backgroundColor: `#${hex}` }} />
        ))}
      </div>
    </div>
  );
}

function SideBar() {
  return (
    <aside className="flex w-16 shrink-0 flex-col items-center border-l-2 border-[#e8e8ee] bg-[#fefefe] text-[#3f3f3f]">
      <button aria-label="패널 펼치기" className="flex h-[62px] items-center pb-1 pl-2.5 text-[#777]">
        <Ic w={26} h={26}><path d="M12 2 2 13l10 11M24 2 14 13l10 11" /></Ic>
      </button>
      <button aria-label="채우기" className="flex h-[70px] w-full items-center justify-center bg-[#3b82ff] pl-3 text-white"><BucketIcon size={38} /></button>
      <button aria-label="문서 정보" className="mt-9 ml-2.5">
        <Ic w={32} h={36} sw={4}><path d="M2 2h21l7 7v25H2z" /><path d="M22 2v8h8z" fill="currentColor" strokeWidth="1" /><path d="M8 16h0M8 24h0M14 16h10M14 24h10" /></Ic>
      </button>
      <button aria-label="프레젠테이션" className="mt-[54px] ml-2.5">
        <Ic w={40} h={38} sw={4}><path d="M2 4h36M6 4v24h28V4M14 30l-4 5M26 30l4 5" /><path d="m17 12 8 5-8 5z" fill="currentColor" strokeWidth="2" /></Ic>
      </button>
      <button aria-label="도움말" className="mt-[50px] ml-2.5">
        <Ic w={38} h={38} sw={4}><circle cx="19" cy="19" r="16" /><path d="M14 15c0-6 10-6 10 0 0 3-5 3-5 7M19 27v.5" /></Ic>
      </button>
      <button aria-label="설정" className="mt-auto mb-3 ml-2.5"><Gear size={38} sw={3} /></button>
    </aside>
  );
}

/* ---------- Status bar ---------- */

function Bar({ c = "" }: { c?: string }) {
  return <span className={`h-11 w-0.5 shrink-0 bg-[#dadbe1] ${c}`} />;
}

function StatusBar() {
  return (
    <footer className="flex h-[60px] shrink-0 items-center bg-linear-to-b from-[#f0f1f7] to-[#dcdde1] pt-1 text-[26px] text-[#222]">
      <button aria-label="화면 보기" className="flex w-[92px] justify-center pl-2.5">
        <Ic w={36} h={22}><path d="M1 1v20M35 1v20" /><rect x="7" y="1" width="21" height="19" /></Ic>
      </button>
      <Bar />
      <label className="flex w-[256px] items-center pr-6 pl-8 text-[27px]">
        <select aria-label="페이지 선택" className="min-w-0 grow appearance-none"><option>페이지-4</option></select>
        <svg width="13" height="9" viewBox="0 0 13 9" fill="#757575" aria-hidden="true"><path d="M0 0h13L6.500 9z" /></svg>
      </label>
      <Bar />
      <button aria-label="페이지 추가" className="flex w-20 justify-center"><Ic w={24} h={24}><path d="M12 1v22M1 12h22" /></Ic></button>
      <Bar />
      <nav className="flex text-[27px] font-medium">
        {[1, 2, 3, 4, 5, 6].map((n) => (
          <button key={n} className={`flex h-11 w-[146px] items-center justify-center border-r-2 border-[#dadbe1] ${n === 4 ? "text-[#3b82ff]" : ""}`}>{`페이지-${n}`}</button>
        ))}
      </nav>
      <Bar c="ml-[42px]" />
      <span className="w-[168px] shrink-0 text-center text-[24px] whitespace-nowrap">형태 수: 222</span>
      <Bar />
      <button aria-label="레이어" className="ml-6 flex items-center gap-2">
        <Ic w={34} h={32}><path d="M17 2 32 12 17 22 2 12zM2 20l15 10 15-10" /></Ic>
        <Caret c={CARET} />
      </button>
      <button className="ml-8 flex items-center gap-5">
        <Ic w={30} h={30}><path d="M9 2H2v7M21 2h7v7M9 28H2v-7M21 28h7v-7M10 8h7l4 4v10H10z" /></Ic>
        집중
      </button>
      <button aria-label="재생" className="ml-6"><Ic w={34} h={34}><circle cx="17" cy="17" r="15" /><path d="m13 11 9 6-9 6z" /></Ic></button>
      <Bar c="ml-5" />
      <div className="ml-auto flex items-center">
        <button aria-label="축소"><Ic w={22} h={4}><path d="M1 2h20" /></Ic></button>
        <input
          type="range"
          aria-label="확대/축소"
          min={0}
          max={100}
          defaultValue={10}
          className="mx-[22px] h-6 w-[192px] appearance-none [&::-webkit-slider-runnable-track]:h-1.5 [&::-webkit-slider-runnable-track]:rounded-full [&::-webkit-slider-runnable-track]:bg-linear-to-r [&::-webkit-slider-runnable-track]:from-[#3f3f3f] [&::-webkit-slider-runnable-track]:from-15% [&::-webkit-slider-runnable-track]:to-[#f3f3f5] [&::-webkit-slider-runnable-track]:to-15% [&::-webkit-slider-thumb]:-mt-[9px] [&::-webkit-slider-thumb]:size-6 [&::-webkit-slider-thumb]:appearance-none [&::-webkit-slider-thumb]:rounded-full [&::-webkit-slider-thumb]:border-4 [&::-webkit-slider-thumb]:border-[#3f3f3f] [&::-webkit-slider-thumb]:bg-[#f6f6f6]"
        />
        <button aria-label="확대"><Ic w={22} h={22}><path d="M11 1v20M1 11h20" /></Ic></button>
        <label className="ml-11 flex w-[88px] items-center text-[24px]">
          <select aria-label="배율" className="min-w-0 grow appearance-none"><option>47%</option></select>
          <Caret c={CARET} />
        </label>
      </div>
      <Bar c="ml-6" />
      <button aria-label="화면에 맞추기" className="ml-6"><Ic w={30} h={30}><path d="M10 2H2v8M20 2h8v8M10 28H2v-8M20 28h8v-8" /><rect x="9" y="10" width="12" height="10" /></Ic></button>
      <button aria-label="너비에 맞추기" className="mr-9 ml-[34px]"><Ic w={28} h={30}><rect x="1" y="1" width="26" height="28" rx="1" /><path d="M6 15h16M9 11l-4 4 4 4M19 11l4 4-4 4" /></Ic></button>
    </footer>
  );
}

/* ---------- Annotation layer ---------- */

function Annotations() {
  return (
    <div className="pointer-events-none absolute inset-0">
      <div className="absolute top-[416px] bottom-[50px] left-1.5 w-[440px] border-[10px] border-[#ec4124]" />
      <svg width="600" height="150" viewBox="0 0 600 150" className="absolute top-[685px] left-[200px]" fill="#ec4124" aria-hidden="true">
        <path d="M8 7 524 111l4-20 46 36-57 15 4-20L6 17z" />
      </svg>
      <p className="absolute top-[326px] left-[444px] text-[56px] leading-[70px] font-black whitespace-nowrap text-[#ec4124]">기호 라이브러리</p>
    </div>
  );
}

export default function App() {
  return (
    <div className="relative flex h-screen min-h-[900px] w-full flex-col overflow-hidden bg-white font-['Inter','Noto_Sans_CJK_KR',sans-serif]">
      <TopBar />
      <Ribbon />
      <main className="flex min-h-0 grow">
        <LibraryPanel />
        <div className="flex min-w-0 grow flex-col">
          <Workspace />
          <div className="flex h-[29px] shrink-0 items-center border-b-2 border-[#ececef] bg-[#fefefe]">
            <div className="ml-[366px] h-5 w-[1244px] rounded-full bg-[#d2d3d5]" />
            <div className="ml-auto h-[30px] w-[30px] border-2 border-[#bdbdc8] bg-[#ebeaf1]" />
          </div>
          <ColorStrip />
        </div>
        <SideBar />
      </main>
      <StatusBar />
      <Annotations />
    </div>
  );
}
